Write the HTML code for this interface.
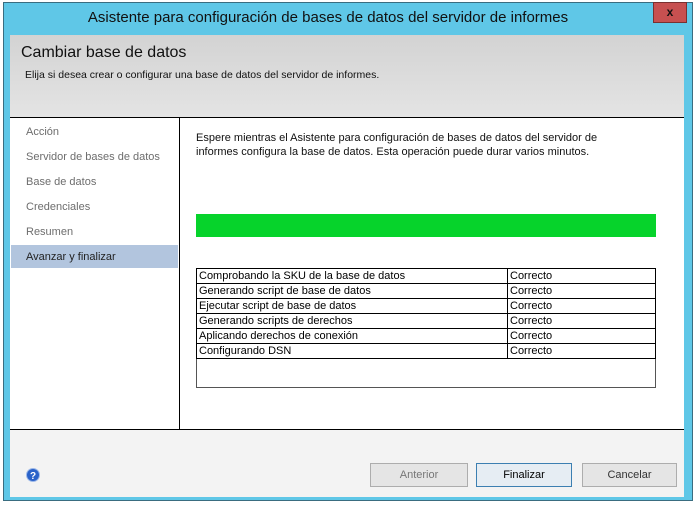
<!DOCTYPE html>
<html><head><meta charset="utf-8"><style>
*{margin:0;padding:0;box-sizing:border-box}
body{width:699px;height:509px;background:#fff;position:relative;overflow:hidden;font-family:"Liberation Sans",sans-serif;font-size:11px;color:#000}
.abs{position:absolute}
.frame{left:3px;top:2px;width:690px;height:499px;background:#5fc7e7;border:1px solid #3a6d80}
.title{left:3px;top:9px;width:650px;text-align:center;font-size:15px;color:#111}
.close{left:653px;top:2px;width:34px;height:21px;background:#c75050;border:1px solid #7a3030;color:#111;font-weight:bold;font-size:12px;text-align:center;line-height:19px}
.inner{left:10px;top:35px;width:674px;height:462px;background:#f3f3f3}
.header{left:10px;top:35px;width:674px;height:83px;background:linear-gradient(#d3d3d3,#e4e4e4);border-bottom:1px solid #000}
.body{left:10px;top:118px;width:674px;height:312px;background:#fff;border-bottom:1px solid #000}
.nav{left:10px;top:118px;width:170px;height:311px;border-right:1px solid #000}
.nav div{position:absolute;left:16px;color:#6d6d6d;font-size:11px}
.sel{left:11px;top:245px;width:167px;height:23px;background:#b2c5de}
table{position:absolute;left:196px;top:268px;width:460px;border-collapse:collapse;font-size:11px}
td{border:1px solid #000;height:15px;padding:0 2px;line-height:13px}
.btn{top:463px;height:24px;border:1px solid #adadad;background:#e5e5e5;text-align:center;line-height:22px;font-size:11px}
</style></head><body>
<div class="abs frame"></div>
<div class="abs title">Asistente para configuración de bases de datos del servidor de informes</div>
<div class="abs close">x</div>
<div class="abs inner"></div>
<div class="abs header"></div>
<div class="abs" style="left:21px;top:44px;font-size:16px;color:#111">Cambiar base de datos</div>
<div class="abs" style="left:25px;top:69px;font-size:10.5px;color:#111">Elija si desea crear o configurar una base de datos del servidor de informes.</div>
<div class="abs body"></div>
<div class="abs sel"></div>
<div class="abs nav">
<div style="top:8px">Acción</div>
<div style="top:33px">Servidor de bases de datos</div>
<div style="top:58px">Base de datos</div>
<div style="top:83px">Credenciales</div>
<div style="top:108px">Resumen</div>
<div style="top:133px;color:#222">Avanzar y finalizar</div>
</div>
<div class="abs" style="left:196px;top:131px;font-size:11px;line-height:14px;color:#111">Espere mientras el Asistente para configuración de bases de datos del servidor de<br>informes configura la base de datos. Esta operación puede durar varios minutos.</div>
<div class="abs" style="left:196px;top:214px;width:460px;height:23px;background:#06d32b"></div>
<table>
<tr><td style="width:311px">Comprobando la SKU de la base de datos</td><td>Correcto</td></tr>
<tr><td>Generando script de base de datos</td><td>Correcto</td></tr>
<tr><td>Ejecutar script de base de datos</td><td>Correcto</td></tr>
<tr><td>Generando scripts de derechos</td><td>Correcto</td></tr>
<tr><td>Aplicando derechos de conexión</td><td>Correcto</td></tr>
<tr><td>Configurando DSN</td><td>Correcto</td></tr>
<tr><td colspan="2" style="height:29px;border-color:#555"></td></tr>
</table>
<svg class="abs" style="left:26px;top:468px" width="14" height="14"><circle cx="7" cy="7" r="6.5" fill="#2a62c9" stroke="#9cb8e8"/><text x="7" y="11" font-size="10" font-weight="bold" fill="#fff" text-anchor="middle" font-family="Liberation Sans">?</text></svg>
<div class="abs btn" style="left:370px;width:98px;color:#777">Anterior</div>
<div class="abs btn" style="left:476px;width:96px;border-color:#3c7fb1;background:#e6edf3">Finalizar</div>
<div class="abs btn" style="left:582px;width:95px;color:#333">Cancelar</div>
</body></html>
